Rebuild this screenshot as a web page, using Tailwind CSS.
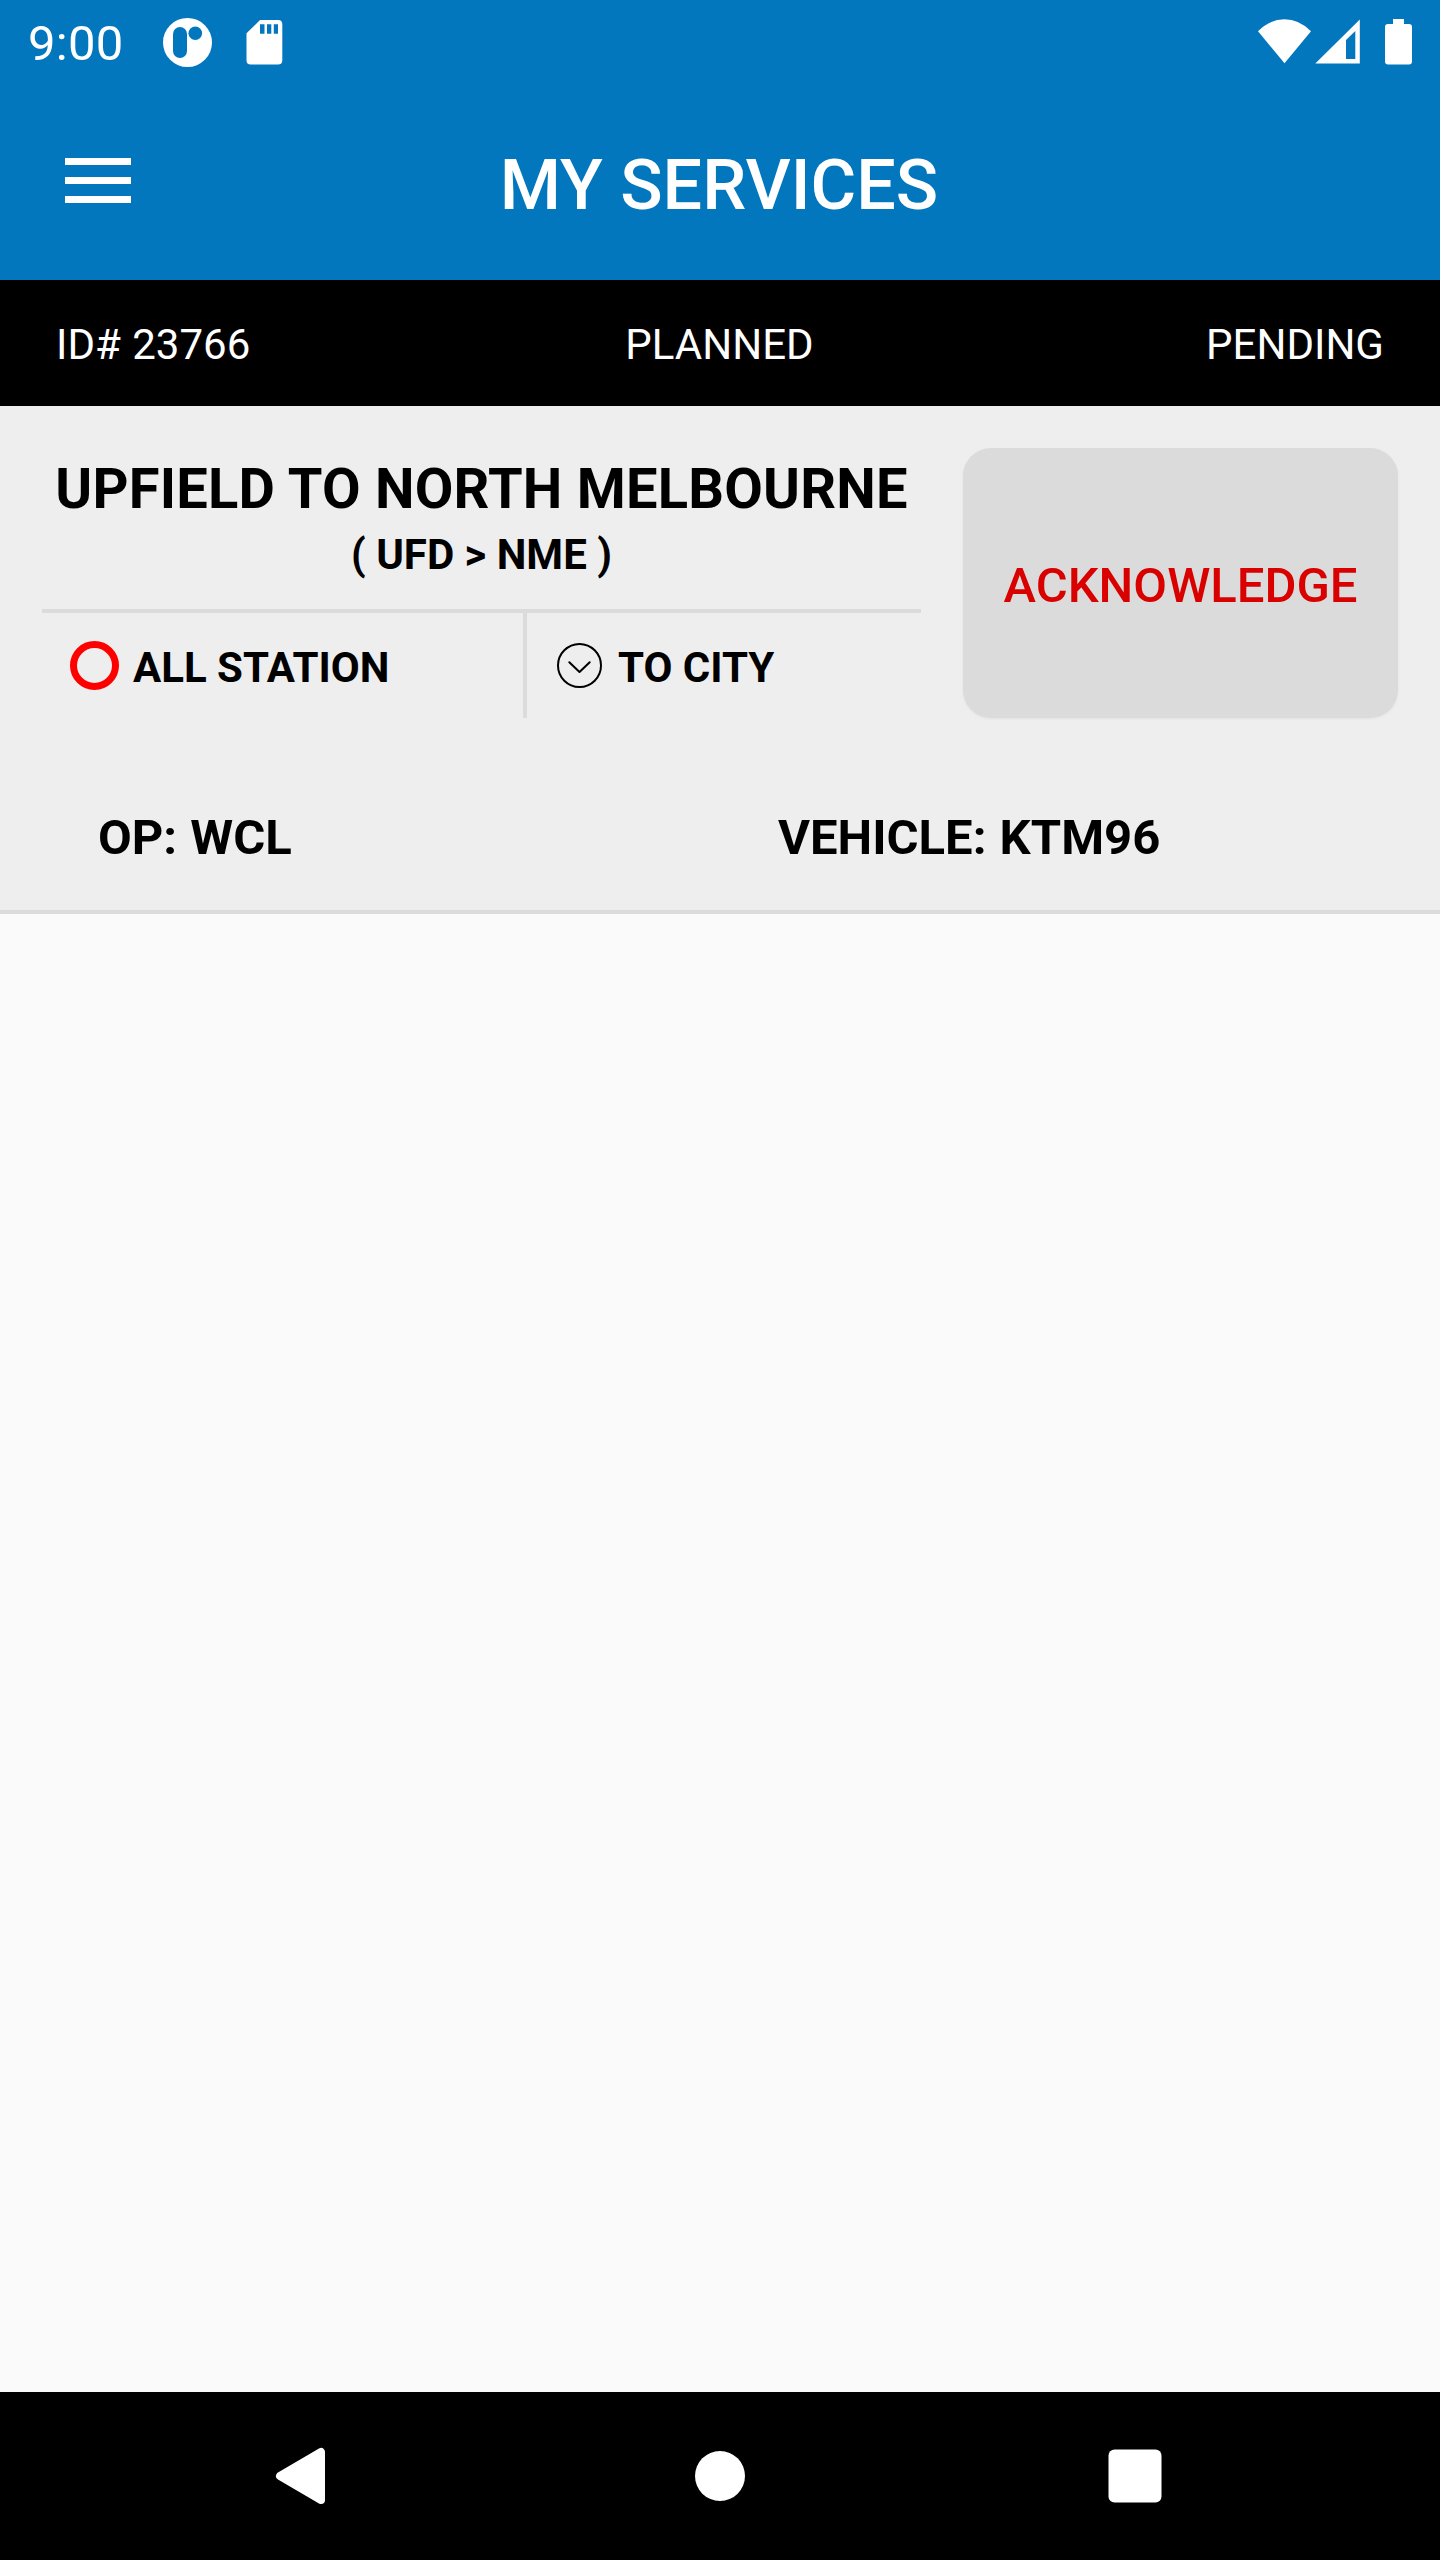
<!DOCTYPE html>
<html lang="en">
<head>
<meta charset="utf-8">
<title>My Services</title>
<script src="https://cdn.jsdelivr.net/npm/@tailwindcss/browser@4"></script>
</head>
<body class="bg-[#fafafa]">
<div class="flex h-[2560px] w-[1440px] flex-col overflow-hidden bg-[#fafafa] font-['Roboto',sans-serif] text-black">

  <header class="h-[280px] shrink-0 bg-[#0277bd] text-white">
    <!-- Status bar -->
    <div class="flex h-[84px] items-center justify-between pr-7 pl-7">
      <div class="flex h-full items-center">
        <span class="w-[135px] pt-[4px] text-[49px] leading-[56px] tracking-[0.3px]">9:00</span>
        <svg class="h-[84px] w-[49px]" viewBox="163 0 49 84">
          <circle cx="187.5" cy="42.5" r="24.5" fill="#fff"/>
          <rect x="173" y="27" width="14" height="31" rx="7" fill="#0277bd"/>
          <circle cx="195.3" cy="33.3" r="6.8" fill="#0277bd"/>
        </svg>
        <svg class="ml-[34px] h-[84px] w-[37px]" viewBox="246 0 37 84">
          <path fill="#fff" fill-rule="evenodd" d="M260 20H278Q282.3 20 282.3 24.3V60.2Q282.3 64.500 278 64.500H250.800Q246.500 64.500 246.500 60.2V33.300ZM260 24.300V33.700H264.500V24.300ZM267 24.300V33.700H271.300V24.300ZM273.800 24.300V33.700H278V24.300Z"/>
        </svg>
      </div>
      <svg class="h-[84px] w-[154px]" viewBox="1258 0 154 84" fill="#fff">
        <path d="M1258 31.200Q1270 19.300 1284.500 19.300T1311 31.200L1284.500 63.300Z"/>
        <path fill-rule="evenodd" d="M1315.300 63.500L1359.800 19.500V63.500ZM1346 40V59H1355.300V31Z"/>
        <path d="M1393 19H1404V24H1409Q1412 24 1412 27V61.500Q1412 64.500 1409 64.500H1388Q1385 64.500 1385 61.500V27Q1385 24 1388 24H1393Z"/>
      </svg>
    </div>
    <!-- App bar -->
    <div class="grid h-[196px] grid-cols-[375px_1fr_375px] items-center">
      <button class="-mt-[3px] ml-[65px] flex w-[66px] flex-col gap-[12px]" aria-label="Menu">
        <span class="h-[7px] w-full bg-white"></span>
        <span class="h-[7px] w-full bg-white"></span>
        <span class="h-[7px] w-full bg-white"></span>
      </button>
      <h1 class="pt-[6px] pr-[2px] text-center text-[70px] leading-[82px] font-medium whitespace-nowrap">MY SERVICES</h1>
    </div>
  </header>

  <main class="flex-1">
    <div class="grid h-[126px] grid-cols-3 items-center bg-black px-14 pt-[3px] text-[42px] leading-[50px] text-white">
      <span class="[word-spacing:1px]">ID# 23766</span>
      <span class="pr-[1px] text-center">PLANNED</span>
      <span class="text-right">PENDING</span>
    </div>

    <section class="h-[508px] border-b-4 border-[#dbdbdb] bg-[#eeeeee] pt-[42px] font-bold">
      <div class="flex h-[270px] gap-[42px] px-[42px]">
        <div class="flex w-[879px] flex-col text-center">
          <h2 class="mt-2 text-[56px] leading-[66px] tracking-[0.22px] whitespace-nowrap">UPFIELD TO NORTH MELBOURNE</h2>
          <p class="mt-2 text-[42px] leading-[50px]">( UFD &gt; NME )</p>
          <div class="mt-auto flex h-[109px] border-t-4 border-[#dbdbdb] text-[42px] leading-[50px]">
            <div class="flex w-[485px] items-center border-r-4 border-[#dbdbdb] pl-7">
              <span class="size-[49px] rounded-full border-[7px] border-[#ff0000]"></span>
              <span class="ml-[14px] pt-[4px]">ALL STATION</span>
            </div>
            <div class="flex items-center pl-[29px]">
              <svg class="size-[47px]" viewBox="0 0 47 47" fill="none" stroke="#000" stroke-width="2">
                <circle cx="23.500" cy="23.500" r="21.500"/>
                <path d="M13.300 20.200L23.500 30L33.700 20.200" stroke-linecap="round" stroke-linejoin="round"/>
              </svg>
              <span class="ml-[15px] pt-[4px]">TO CITY</span>
            </div>
          </div>
        </div>
        <button class="h-[270px] w-[435px] rounded-[28px] bg-[#dbdbdb] pt-[5px] text-[49px] leading-[58px] font-medium text-[#d90000] shadow-[0_1px_3px_rgba(0,0,0,0.05)]">ACKNOWLEDGE</button>
      </div>
      <div class="grid grid-cols-[680px_1fr] pt-[95px] pl-[98px] text-[49px] leading-[50px] [word-spacing:1px]">
        <span>OP: WCL</span>
        <span>VEHICLE: KTM96</span>
      </div>
    </section>
  </main>

  <!-- System navigation -->
  <nav class="flex h-[168px] shrink-0 items-center justify-center bg-black">
    <svg class="h-[168px] w-[1440px]" viewBox="0 2392 1440 168" fill="#fff">
      <path d="M280 2476L321 2452V2500Z" stroke="#fff" stroke-width="8" stroke-linejoin="round"/>
      <circle cx="720" cy="2476" r="25"/>
      <rect x="1108.500" y="2449.500" width="53" height="53" rx="6"/>
    </svg>
  </nav>
</div>
</body>
</html>
